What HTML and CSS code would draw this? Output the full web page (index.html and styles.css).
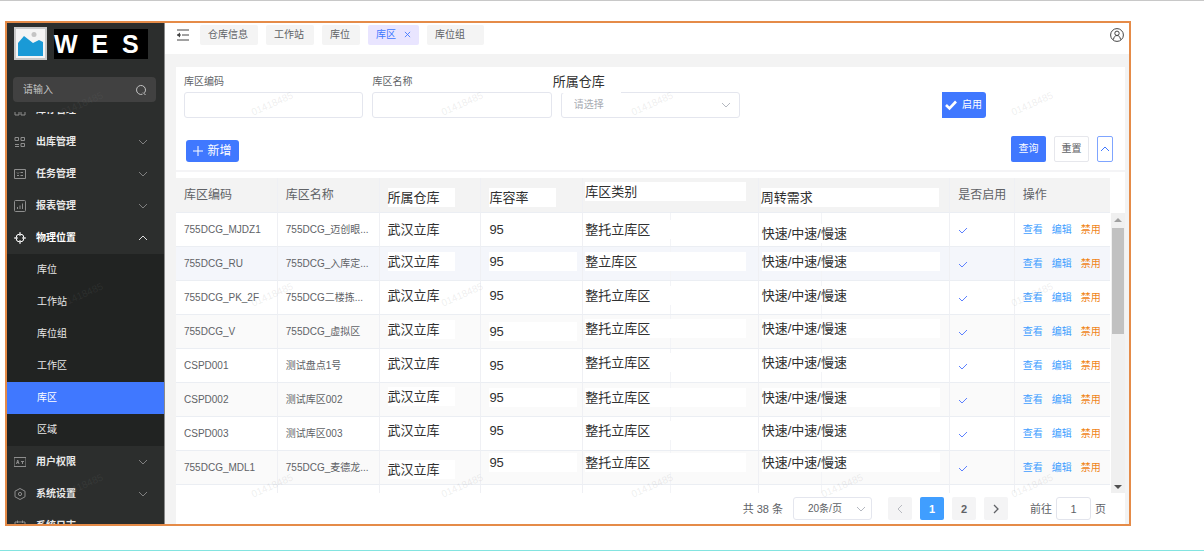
FILE: index.html
```html
<!DOCTYPE html>
<html lang="zh-CN">
<head>
<meta charset="utf-8">
<title>WES 库区</title>
<link rel="stylesheet" href="styles.css">
</head>
<body>
<svg class="sprite" aria-hidden="true">
  <symbol id="down" viewBox="0 0 10 10"><path d="M1 3l4 4 4-4" fill="none" stroke="currentColor"/></symbol>
  <symbol id="up" viewBox="0 0 10 10"><path d="M1 7l4-4 4 4" fill="none" stroke="currentColor"/></symbol>
  <symbol id="tick" viewBox="0 0 10 10"><path d="M1 5l3 3 5-5" fill="none" stroke="currentColor"/></symbol>
</svg>
<div class="frame">
  <aside class="sidebar">
    <div class="brand">
      <svg class="brand-pic" viewBox="0 0 33 33"><rect width="33" height="33" fill="#c9c9c9"/><rect x="2" y="2" width="29" height="29" fill="#f4f4f4"/><circle cx="20" cy="7.500" r="2.500" fill="#c4c4c4"/><path d="M4 16l6-7 9 7 6-3 4 2v14H4z" fill="#1a9ad6"/></svg>
      <span class="brand-name">W  E  S</span>
    </div>
    <div class="menu-search">
      <input type="text" placeholder="请输入" aria-label="搜索菜单">
      <svg viewBox="0 0 12 12"><path d="M7.500 10.200A4.500 4.500 0 1 1 9.500 8.800M8 8.500l2.500 2.500" fill="none" stroke="currentColor"/></svg>
    </div>
    <nav class="menu">
      <ul class="menu-list">
        <li><a class="item" href="#"><svg viewBox="0 0 12 12"><path d="M1 1h4v4H1zM7 1h4v4H7zM1 7h4v4H1zM7 7h4v4H7z"/></svg>库存管理<svg class="chev"><use href="#down"/></svg></a></li>
        <li><a class="item" href="#"><svg viewBox="0 0 12 12"><path d="M1 1.500h3.500v3H1zM7 1.500h3.500v3H7zM7 7.500h3.500v3H7zM1 8.500h4M1 10.500h4"/></svg>出库管理<svg class="chev"><use href="#down"/></svg></a></li>
        <li><a class="item" href="#"><svg viewBox="0 0 12 12"><path d="M.5 1.500h11v9H.5zM3 4.500l1 1 1-1M3 7.500h2M6.500 4.500H9M6.500 7.500H9"/></svg>任务管理<svg class="chev"><use href="#down"/></svg></a></li>
        <li><a class="item" href="#"><svg viewBox="0 0 12 12"><rect x=".5" y=".5" width="11" height="11" rx="1"/><path d="M3.500 9V7M6 9V5.500M8.500 9V3.500"/></svg>报表管理<svg class="chev"><use href="#down"/></svg></a></li>
        <li><a class="item open" href="#"><svg viewBox="0 0 12 12"><circle cx="6" cy="6" r="4"/><path d="M6 0v4M6 8v4M0 6h4M8 6h4"/></svg>物理位置<svg class="chev"><use href="#up"/></svg></a>
          <ul class="submenu">
            <li><a href="#">库位</a></li>
            <li><a href="#">工作站</a></li>
            <li><a href="#">库位组</a></li>
            <li><a href="#">工作区</a></li>
            <li><a class="current" href="#">库区</a></li>
            <li><a href="#">区域</a></li>
          </ul>
        </li>
        <li><a class="item" href="#"><svg viewBox="0 0 12 12"><path d="M0 1.500h12v9H0zM2.500 8l1.200-4L5 8M3 6.500h1.700M7 5.500h3M8.500 5.500V8"/></svg>用户权限<svg class="chev"><use href="#down"/></svg></a></li>
        <li><a class="item" href="#"><svg viewBox="0 0 12 12"><path d="M6 .5l5 2.700v5.600L6 11.500 1 8.800V3.200z"/><circle cx="6" cy="6" r="1.600"/></svg>系统设置<svg class="chev"><use href="#down"/></svg></a></li>
        <li><a class="item" href="#"><svg viewBox="0 0 12 12"><path d="M1 2h10v9.500H1zM3.500.5V3M8.500.5V3M3.500 6h5"/></svg>系统日志<svg class="chev"><use href="#down"/></svg></a></li>
      </ul>
    </nav>
  </aside>

  <main class="main">
    <header class="topbar">
      <button class="fold" aria-label="收起菜单"><svg viewBox="0 0 12 12"><path d="M0 1h12M5 6h7M0 11h12" fill="none" stroke="#444"/><path d="M0 6h4" stroke="#444"/><path d="M0 6l3-2.500v5z" fill="#444"/></svg></button>
      <nav class="tabs">
        <a href="#">仓库信息</a>
        <a href="#">工作站</a>
        <a href="#">库位</a>
        <a class="active" href="#">库区<svg viewBox="0 0 8 8"><path d="M1 1l6 6M7 1L1 7" stroke="currentColor"/></svg></a>
        <a class="wide" href="#">库位组</a>
      </nav>
      <button class="user" aria-label="用户"><svg viewBox="0 0 14 14" fill="none" stroke="#444"><circle cx="7" cy="7" r="6.400"/><circle cx="7" cy="5.300" r="2.200"/><path d="M3.500 11.500c.3-2.500 1.500-4 3.500-4s3.200 1.500 3.500 4"/></svg></button>
    </header>

    <div class="content">
      <section class="panel">
        <form class="search">
          <div class="fields">
            <div class="field"><label for="code">库区编码</label><input id="code" type="text"></div>
            <div class="field"><label for="name">库区名称</label><input id="name" type="text"></div>
            <div class="field"><label class="big" for="house">所属仓库</label>
              <div class="pick"><select id="house"><option>请选择</option></select><svg><use href="#down"/></svg></div></div>
            <button type="button" class="enable"><svg viewBox="0 0 12 12"><path d="M1 6l3.500 3.500L11 2.500" fill="none" stroke="#fff" stroke-width="2.600"/></svg>启用</button>
          </div>
          <div class="actions">
            <button type="button" class="add"><svg viewBox="0 0 10 10"><path d="M5 0v10M0 5h10" stroke="#fff"/></svg>新增</button>
            <button type="button" class="query">查询</button>
            <button type="reset" class="reset">重置</button>
            <button type="button" class="collapse" aria-label="收起"><svg><use href="#up"/></svg></button>
          </div>
        </form>

        <div class="grid">
          <div class="rows">
            <table>
              <colgroup><col class="w-text"><col class="w-text"><col class="w-text"><col class="w-text"><col class="w-kind"><col class="w-kind"><col class="w-turn"><col class="w-turn2"><col class="w-turn"><col class="w-ops"></colgroup>
              <thead><tr><th>库区编码</th><th>库区名称</th><th class="big low"><span class="p-house">所属仓库</span></th><th class="big low"><span class="p-house">库容率</span></th><th class="big tight up2" colspan="2"><span class="p-kind">库区类别</span></th><th class="big tight low" colspan="2"><span class="p-turn">周转需求</span></th><th>是否启用</th><th>操作</th></tr></thead>
              <tbody>
                <tr><td>755DCG_MJDZ1</td><td>755DCG_迈创眼...</td><td class="big"><span class="p-house">武汉立库</span></td><td class="big"><span class="p-rate">95</span></td><td class="big tight split" colspan="2"><span class="p-kind">整托立库区</span></td><td class="big tight low2 split3" colspan="2"><span class="p-turn">快速/中速/慢速</span></td><td><svg class="tick"><use href="#tick"/></svg></td><td><div class="ops"><a href="#">查看</a><a href="#">编辑</a><a class="warn" href="#">禁用</a></div></td></tr>
                <tr class="hover"><td>755DCG_RU</td><td>755DCG_入库定...</td><td class="big up"><span class="p-house">武汉立库</span></td><td class="big up"><span class="p-rate">95</span></td><td class="big tight up split" colspan="2"><span class="p-kind">整立库区</span></td><td class="big tight up split3" colspan="2"><span class="p-turn">快速/中速/慢速</span></td><td><svg class="tick"><use href="#tick"/></svg></td><td><div class="ops"><a href="#">查看</a><a href="#">编辑</a><a class="warn" href="#">禁用</a></div></td></tr>
                <tr><td>755DCG_PK_2F</td><td>755DCG二楼拣...</td><td class="big up"><span class="p-house">武汉立库</span></td><td class="big up"><span class="p-rate">95</span></td><td class="big tight up split" colspan="2"><span class="p-kind">整托立库区</span></td><td class="big tight up split3" colspan="2"><span class="p-turn">快速/中速/慢速</span></td><td><svg class="tick"><use href="#tick"/></svg></td><td><div class="ops"><a href="#">查看</a><a href="#">编辑</a><a class="warn" href="#">禁用</a></div></td></tr>
                <tr class="stripe"><td>755DCG_V</td><td>755DCG_虚拟区</td><td class="big up"><span class="p-house">武汉立库</span></td><td class="big"><span class="p-rate">95</span></td><td class="big tight up2 split" colspan="2"><span class="p-kind">整托立库区</span></td><td class="big tight up2 split3" colspan="2"><span class="p-turn">快速/中速/慢速</span></td><td><svg class="tick"><use href="#tick"/></svg></td><td><div class="ops"><a href="#">查看</a><a href="#">编辑</a><a class="warn" href="#">禁用</a></div></td></tr>
                <tr><td>CSPD001</td><td>测试盘点1号</td><td class="big up"><span class="p-house">武汉立库</span></td><td class="big"><span class="p-rate">95</span></td><td class="big tight up2 split" colspan="2"><span class="p-kind">整托立库区</span></td><td class="big tight up2 split3" colspan="2"><span class="p-turn">快速/中速/慢速</span></td><td><svg class="tick"><use href="#tick"/></svg></td><td><div class="ops"><a href="#">查看</a><a href="#">编辑</a><a class="warn" href="#">禁用</a></div></td></tr>
                <tr class="stripe"><td>CSPD002</td><td>测试库区002</td><td class="big up2"><span class="p-house">武汉立库</span></td><td class="big up"><span class="p-rate">95</span></td><td class="big tight up split" colspan="2"><span class="p-kind">整托立库区</span></td><td class="big tight up split3" colspan="2"><span class="p-turn">快速/中速/慢速</span></td><td><svg class="tick"><use href="#tick"/></svg></td><td><div class="ops"><a href="#">查看</a><a href="#">编辑</a><a class="warn" href="#">禁用</a></div></td></tr>
                <tr><td>CSPD003</td><td>测试库区003</td><td class="big up2"><span class="p-house">武汉立库</span></td><td class="big up2"><span class="p-rate">95</span></td><td class="big tight up2 split" colspan="2"><span class="p-kind">整托立库区</span></td><td class="big tight up2 split3" colspan="2"><span class="p-turn">快速/中速/慢速</span></td><td><svg class="tick"><use href="#tick"/></svg></td><td><div class="ops"><a href="#">查看</a><a href="#">编辑</a><a class="warn" href="#">禁用</a></div></td></tr>
                <tr class="stripe"><td>755DCG_MDL1</td><td>755DCG_麦德龙...</td><td class="big low"><span class="p-house">武汉立库</span></td><td class="big up3"><span class="p-rate">95</span></td><td class="big tight up3 split" colspan="2"><span class="p-kind">整托立库区</span></td><td class="big tight up3 split3" colspan="2"><span class="p-turn">快速/中速/慢速</span></td><td><svg class="tick"><use href="#tick"/></svg></td><td><div class="ops"><a href="#">查看</a><a href="#">编辑</a><a class="warn" href="#">禁用</a></div></td></tr>
                <tr><td></td><td></td><td></td><td></td><td class="split" colspan="2"></td><td class="split3" colspan="2"></td><td></td><td></td></tr>
              </tbody>
            </table>
          </div>
          <div class="scrollbar"><i class="arrow-up"></i><i class="thumb"></i><i class="arrow-down"></i></div>
        </div>

        <footer class="pager">
          <span class="total">共 38 条</span>
          <div class="pick size"><select aria-label="每页条数"><option>20条/页</option></select><svg><use href="#down"/></svg></div>
          <button class="page off" aria-label="上一页"><svg viewBox="0 0 10 10"><path d="M7 1L3 5l4 4" fill="none" stroke="currentColor"/></svg></button>
          <button class="page on">1</button>
          <button class="page">2</button>
          <button class="page" aria-label="下一页"><svg viewBox="0 0 10 10"><path d="M3 1l4 4-4 4" fill="none" stroke="currentColor" stroke-width="1.300"/></svg></button>
          <label class="jump" for="goto">前往</label><input id="goto" class="goto" type="text" value="1"><span class="unit">页</span>
        </footer>
      </section>
    </div>
  </main>

  <div class="marks" aria-hidden="true">
    <span>01418485</span><span>01418485</span><span>01418485</span><span>01418485</span><span></span><span>01418485</span>
    <span>01418485</span><span>01418485</span><span>01418485</span><span></span><span></span><span>01418485</span>
    <span>01418485</span><span>01418485</span><span>01418485</span><span>01418485</span><span>01418485</span><span>01418485</span>
  </div>
</div>
</body>
</html>
```
FILE: styles.css
```css
* { box-sizing: border-box; }
body {
  margin: 0;
  height: 100vh;
  display: flex;
  flex-direction: column;
  padding: 20px 73px 24px 5px;
  border-top: 1px solid #c8c8c8;
  border-bottom: 1px solid #84e4e0;
  background: #fff;
  color: #606266;
  font: 10px/16px "Liberation Sans", "Noto Sans CJK SC", sans-serif;
}
ul { list-style: none; margin: 0; padding: 0; }
a { color: inherit; text-decoration: none; }
button, input, select { font: inherit; color: inherit; margin: 0; padding: 0; border: 0; background: none; }
.sprite { position: absolute; width: 0; height: 0; }

.frame {
  position: relative;
  flex: 1;
  min-height: 0;
  display: flex;
  border: 2px solid #e58b48;
  overflow: hidden;
}

/* sidebar */
.sidebar {
  flex: none;
  width: 158px;
  display: flex;
  flex-direction: column;
  background: #2c2e2d;
  border-right: 1px solid #8a8a8a;
  color: #e8e8e8;
}
.brand { display: flex; align-items: center; gap: 7px; padding: 4px 7px 0; }
.brand-pic { width: 33px; height: 33px; }
.brand-name {
  width: 94px;
  background: #000;
  color: #fff;
  font-weight: bold;
  font-size: 25px;
  line-height: 30px;
  white-space: pre;
}
.menu-search {
  display: flex;
  align-items: center;
  margin: 17px 8px 10px 6px;
  padding: 0 9px 0 10px;
  height: 25px;
  border-radius: 4px;
  background: #414141;
}
.menu-search input { flex: 1; min-width: 0; }
.menu-search input::placeholder { color: #c4c4c4; }
.menu-search svg { width: 12px; height: 12px; color: #c4c4c4; }
.menu { flex: 1; min-height: 0; overflow: hidden; }
.menu-list { margin-top: -18px; }
.item {
  display: flex;
  align-items: center;
  gap: 10px;
  height: 32px;
  padding: 0 16px 0 7px;
  font-weight: bold;
}
.item svg { width: 12px; height: 12px; fill: none; stroke: #8e8e8e; }
.item .chev { width: 10px; height: 10px; margin-left: auto; color: #808080; stroke: none; }
.item.open { color: #fff; }
.item.open svg { stroke: #fff; }
.item.open .chev { color: #ddd; stroke: none; }
.submenu { background: #212322; }
.submenu a { display: block; line-height: 32px; padding-left: 30px; }
.submenu .current { background: #4078ff; color: #fff; }

/* top bar */
.main { flex: 1; min-width: 0; display: flex; flex-direction: column; background: #f3f3f3; }
.topbar {
  display: flex;
  align-items: center;
  height: 31px;
  padding: 0 5px 8px 12px;
  background: #fff;
}
.fold, .user { display: flex; }
.fold svg { width: 12px; height: 12px; }
.user { margin-left: auto; }
.user svg { width: 14px; height: 14px; }
.tabs { display: flex; gap: 8px; margin-left: 11px; }
.tabs a {
  display: flex;
  align-items: center;
  gap: 8px;
  height: 20px;
  padding: 0 10px 0 8px;
  border-radius: 2px;
  background: #f4f4f4;
}
.tabs .active { padding-right: 8px; background: #e9e5ff; color: #4078ff; }
.tabs .wide { padding-right: 19px; }
.tabs svg { width: 7px; height: 7px; }

/* panel */
.content { flex: 1; min-height: 0; display: flex; padding: 13px 4px 0 11px; }
.panel { flex: 1; min-width: 0; display: flex; flex-direction: column; background: #fff; }
.search { padding: 6px 8px 8px; border-bottom: 2px solid #f4f4f6; margin-bottom: 6px; }
.fields { display: grid; grid-template-columns: repeat(5, 1fr); gap: 9px; align-items: end; }
.field { display: flex; flex-direction: column; }
.field label { line-height: 16px; margin-bottom: 2px; }
.field label.big {
  position: relative;
  z-index: 1;
  width: 68px;
  margin: 0 0 -1px -8px;
  padding-bottom: 3px;
  line-height: 17px;
  background: #fff;
}
.big { font-size: 13px; color: #303030; }
.field input, .pick {
  height: 26px;
  border: 1px solid #e4e6ee;
  border-radius: 3px;
  background: #fff;
}
.field input { padding: 0 8px; width: 100%; }
.pick { position: relative; display: flex; align-items: center; }
.pick select { flex: 1; height: 100%; padding-left: 12px; appearance: none; color: #a8abb2; }
.pick svg { position: absolute; right: 8px; width: 10px; height: 10px; color: #b4b8c0; pointer-events: none; }
.search button { display: flex; align-items: center; justify-content: center; height: 26px; }
.search .enable {
  grid-column: 5;
  gap: 5px;
  width: 44px;
  margin-left: 4px;
  border-radius: 0 3px 3px 0;
  background: #4078ff;
  color: #fff;
}
.enable svg { width: 12px; height: 12px; }
.actions { display: flex; align-items: flex-end; gap: 8px; margin: 18px 4px 0 2px; }
.search .add {
  gap: 4px;
  height: 22px;
  width: 53px;
  margin-right: auto;
  border-radius: 3px;
  background: #4078ff;
  color: #fff;
  font-size: 12px;
}
.add svg { width: 10px; height: 10px; }
.query, .reset { width: 35px; border-radius: 2px; }
.query { background: #4078ff; color: #fff; }
.reset { border: 1px solid #e6e7ec; }
.collapse { width: 16px; border: 1px solid #7fa5ff; border-radius: 2px; color: #4078ff; }
.collapse svg { width: 10px; height: 10px; flex: none; }

/* table */
.grid { flex: 1; min-height: 0; display: flex; }
.rows { flex: 1; min-width: 0; overflow: hidden; }
table { width: 100%; border-collapse: separate; border-spacing: 0; table-layout: fixed; }
.w-text { width: 10.9%; }
.w-kind { width: 9.4%; }
.w-turn { width: 6.9%; }
.w-turn2 { width: 13.6%; }
.w-ops { width: 10.2%; }
th, td {
  height: 34px;
  padding: 0 0 0 8px;
  border-right: 1px solid #eff0f4;
  border-bottom: 1px solid #ebeef3;
  text-align: left;
  vertical-align: middle;
  white-space: nowrap;
  overflow: hidden;
}
th:last-child, td:last-child { border-right: 0; }
th { height: 35px; background: #f3f3f3; font-weight: normal; font-size: 12px; }
th.big { font-size: 13px; }
.tight { padding-left: 2px; }
.up { padding-bottom: 4px; }
.up2 { padding-bottom: 7px; }
.up3 { padding-bottom: 11px; }
.low { padding-top: 4px; }
.low2 { padding-top: 8px; }
.hover { background: #f4f6fb; }
.stripe { background: #fafafa; }
.big span { display: block; line-height: 19px; background: #fff; }
.p-house { width: 67px; }
.p-rate { width: 88px; }
.p-kind { width: 161px; }
.p-turn { width: 178px; }
.split { background: linear-gradient(#f3f4f7, #f3f4f7) 50% 0 / 1px 100% no-repeat; }
.split3 { padding-left: 3px; background: linear-gradient(#f3f4f7, #f3f4f7) 33% 0 / 1px 100% no-repeat; }
.tick { display: block; width: 10px; height: 10px; color: #5c80ff; }
.ops { display: flex; gap: 9px; color: #409eff; }
.ops .warn { color: #f08519; }
.scrollbar {
  width: 14px;
  margin: 35px 0 0 1px;
  display: flex;
  flex-direction: column;
  align-items: center;
  background: #f0f0f0;
}
.thumb { width: 12px; height: 38%; margin-top: 6px; background: #c1c1c1; }
.arrow-up, .arrow-down { border: 4px solid transparent; }
.arrow-up { margin-top: 5px; border-bottom: 4px solid #a0a0a0; border-top: 0; }
.arrow-down { margin: auto 0 4px; border-top: 4px solid #505050; border-bottom: 0; }

/* pagination */
.pager {
  display: flex;
  align-items: center;
  justify-content: flex-end;
  gap: 8px;
  height: 31px;
  padding-right: 19px;
  font-size: 11px;
}
.size { width: 79px; height: 23px; margin: 0 8px 0 2px; font-size: 10px; }
.pager .size select { padding-left: 14px; color: #606266; }
.size svg { right: 5px; }
.page {
  display: flex;
  align-items: center;
  justify-content: center;
  width: 24px;
  height: 23px;
  border-radius: 2px;
  background: #f4f4f5;
  font-weight: bold;
}
.page svg { width: 10px; height: 10px; }
.page.off { color: #b8bac0; }
.page.on { background: #409eff; color: #fff; }
.jump { margin: 0 -4px 0 14px; }
.goto { width: 35px; height: 23px; border: 1px solid #e2e4ec; border-radius: 3px; text-align: center; }
.unit { margin-left: -4px; }

/* watermark */
.marks {
  position: absolute;
  top: -15px;
  left: -20px;
  display: grid;
  grid-template-columns: repeat(6, 190px);
  grid-auto-rows: 191px;
  place-items: center;
  color: rgba(128, 128, 128, 0.14);
  pointer-events: none;
}
.marks span { transform: rotate(-24deg); }
```
